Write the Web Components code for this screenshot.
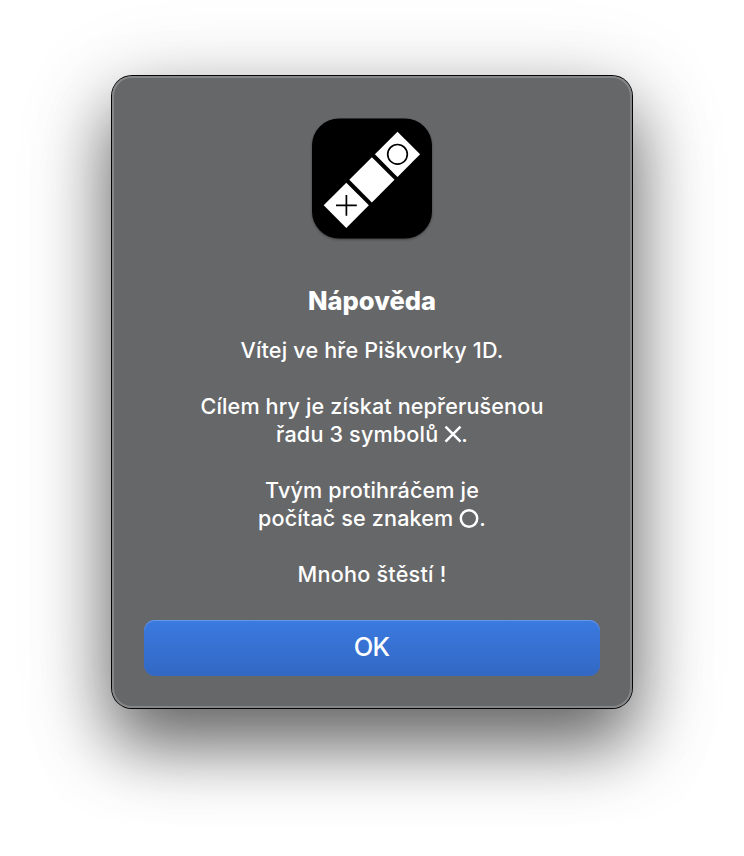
<!DOCTYPE html>
<html lang="cs">
<head>
<meta charset="utf-8">
<title>Nápověda</title>
<style>
html, body { margin: 0; background: #fff; }
body { height: 856px; overflow: hidden; }
</style>
</head>
<body>
<help-dialog>
  <game-icon slot="icon"></game-icon>
  <text-line slot="title" heading style="--w:128px">Nápověda</text-line>
  <text-line style="--w:263px">Vítej ve hře Piškvorky 1D.</text-line>
  <text-line></text-line>
  <text-line style="--w:343px">Cílem hry je získat nepřerušenou</text-line>
  <text-line style="--w:192px">řadu 3 symbolů <mark-glyph kind="cross"></mark-glyph>.</text-line>
  <text-line></text-line>
  <text-line style="--w:214px">Tvým protihráčem je</text-line>
  <text-line style="--w:228px">počítač se znakem <mark-glyph kind="ring"></mark-glyph>.</text-line>
  <text-line></text-line>
  <text-line style="--w:149px">Mnoho štěstí !</text-line>
  <push-button slot="actions">OK</push-button>
</help-dialog>
<script>
class BaseElement extends HTMLElement {
  constructor() {
    super();
    this.attachShadow({ mode: 'open' }).innerHTML = this.constructor.markup;
  }
}

customElements.define('help-dialog', class extends BaseElement {
  static markup = `
    <style>
      :host { display: flex; justify-content: center; padding-top: 76px; font-family: Inter, "Liberation Sans", sans-serif; color: #fff; }
      .panel { box-sizing: border-box; width: 520px; height: 632px; padding: 42px 32px 32px; border-radius: 20px;
        display: flex; flex-direction: column; align-items: center; background: #666769;
        box-shadow: inset 0 0 0 2px #858688, 0 0 0 1px #050505, 0 36px 68px rgba(0,0,0,.53), 0 20px 96px rgba(0,0,0,.21); }
      .title { margin-top: 46px; }
      .body { margin-top: 19px; }
      .actions { margin-top: auto; width: 100%; }
    </style>
    <div class="panel">
      <slot name="icon"></slot>
      <div class="title"><slot name="title"></slot></div>
      <div class="body"><slot></slot></div>
      <div class="actions"><slot name="actions"></slot></div>
    </div>`;
});

customElements.define('game-icon', class extends BaseElement {
  static markup = `
    <style>:host { display: block; height: 121px; } svg { display: block; filter: drop-shadow(0 1px 1px rgba(0,0,0,.4)); }</style>
    <svg width="122" height="122" viewBox="311 118 122 122">
      <rect x="312" y="118.5" width="120" height="120" rx="27" fill="#000"/>
      <g fill="#fff">
        <path d="M346.3 182.7l22.6 22.6-22.6 22.6-22.6-22.6z"/>
        <path d="M371.9 157.2l22.6 22.6-22.6 22.6-22.6-22.6z"/>
        <path d="M397.5 131.7l22.6 22.6-22.6 22.6-22.6-22.6z"/>
      </g>
      <g fill="none" stroke="#000" stroke-width="1.7">
        <path d="M346.4 194.9v20.8M336 205.3h20.8"/>
        <circle cx="397.5" cy="154.3" r="9.8"/>
      </g>
    </svg>`;
});

customElements.define('mark-glyph', class extends BaseElement {
  static markup = `
    <style>
      :host { display: inline-block; width: 20px; height: 20px; line-height: 0; white-space: normal; vertical-align: -3px; letter-spacing: 0; }
      svg { display: block; fill: none; stroke: #fff; stroke-width: 2.5; }
      :host([kind=cross]) circle, :host([kind=ring]) path { display: none; }
      :host([kind=cross]) { width: 17px; }
      :host([kind=cross]) svg { margin-left: -1.5px; }
    </style>
    <svg width="20" height="20"><path d="M2.5 1.7l15 15M17.5 1.7l-15 15"/><circle cx="10" cy="9.5" r="8.2"/></svg>`;
});

/* A centred line whose tracking is spread so the text takes up --w. */
customElements.define('text-line', class extends BaseElement {
  static markup = `
    <style>
      :host { display: flex; justify-content: center; height: 28px; line-height: 28px; font-size: 21.6px; font-weight: 530; white-space: nowrap; }
      :host([heading]) { height: 32px; line-height: 32px; font-size: 25.5px; font-weight: 800; }
    </style>
    <span><slot></slot></span>`;
  connectedCallback() {
    const target = parseFloat(this.style.getPropertyValue('--w'));
    if (!target) return;
    const span = this.shadowRoot.querySelector('span');
    const count = this.textContent.length;
    span.style.letterSpacing = (target - span.getBoundingClientRect().width) / count + 'px';
  }
});

customElements.define('push-button', class extends BaseElement {
  static markup = `
    <style>
      :host { display: block; }
      button { display: block; width: 100%; height: 56px; padding: 0 1px 2px 0; border: 0; border-radius: 11px; color: #fff;
        font: 500 25.5px/54px Inter, "Liberation Sans", sans-serif; letter-spacing: -.7px;
        background: linear-gradient(#3b7ae0, #3268c4); box-shadow: inset 0 1px 0 #6798e5; }
    </style>
    <button><slot></slot></button>`;
});
</script>
</body>
</html>
